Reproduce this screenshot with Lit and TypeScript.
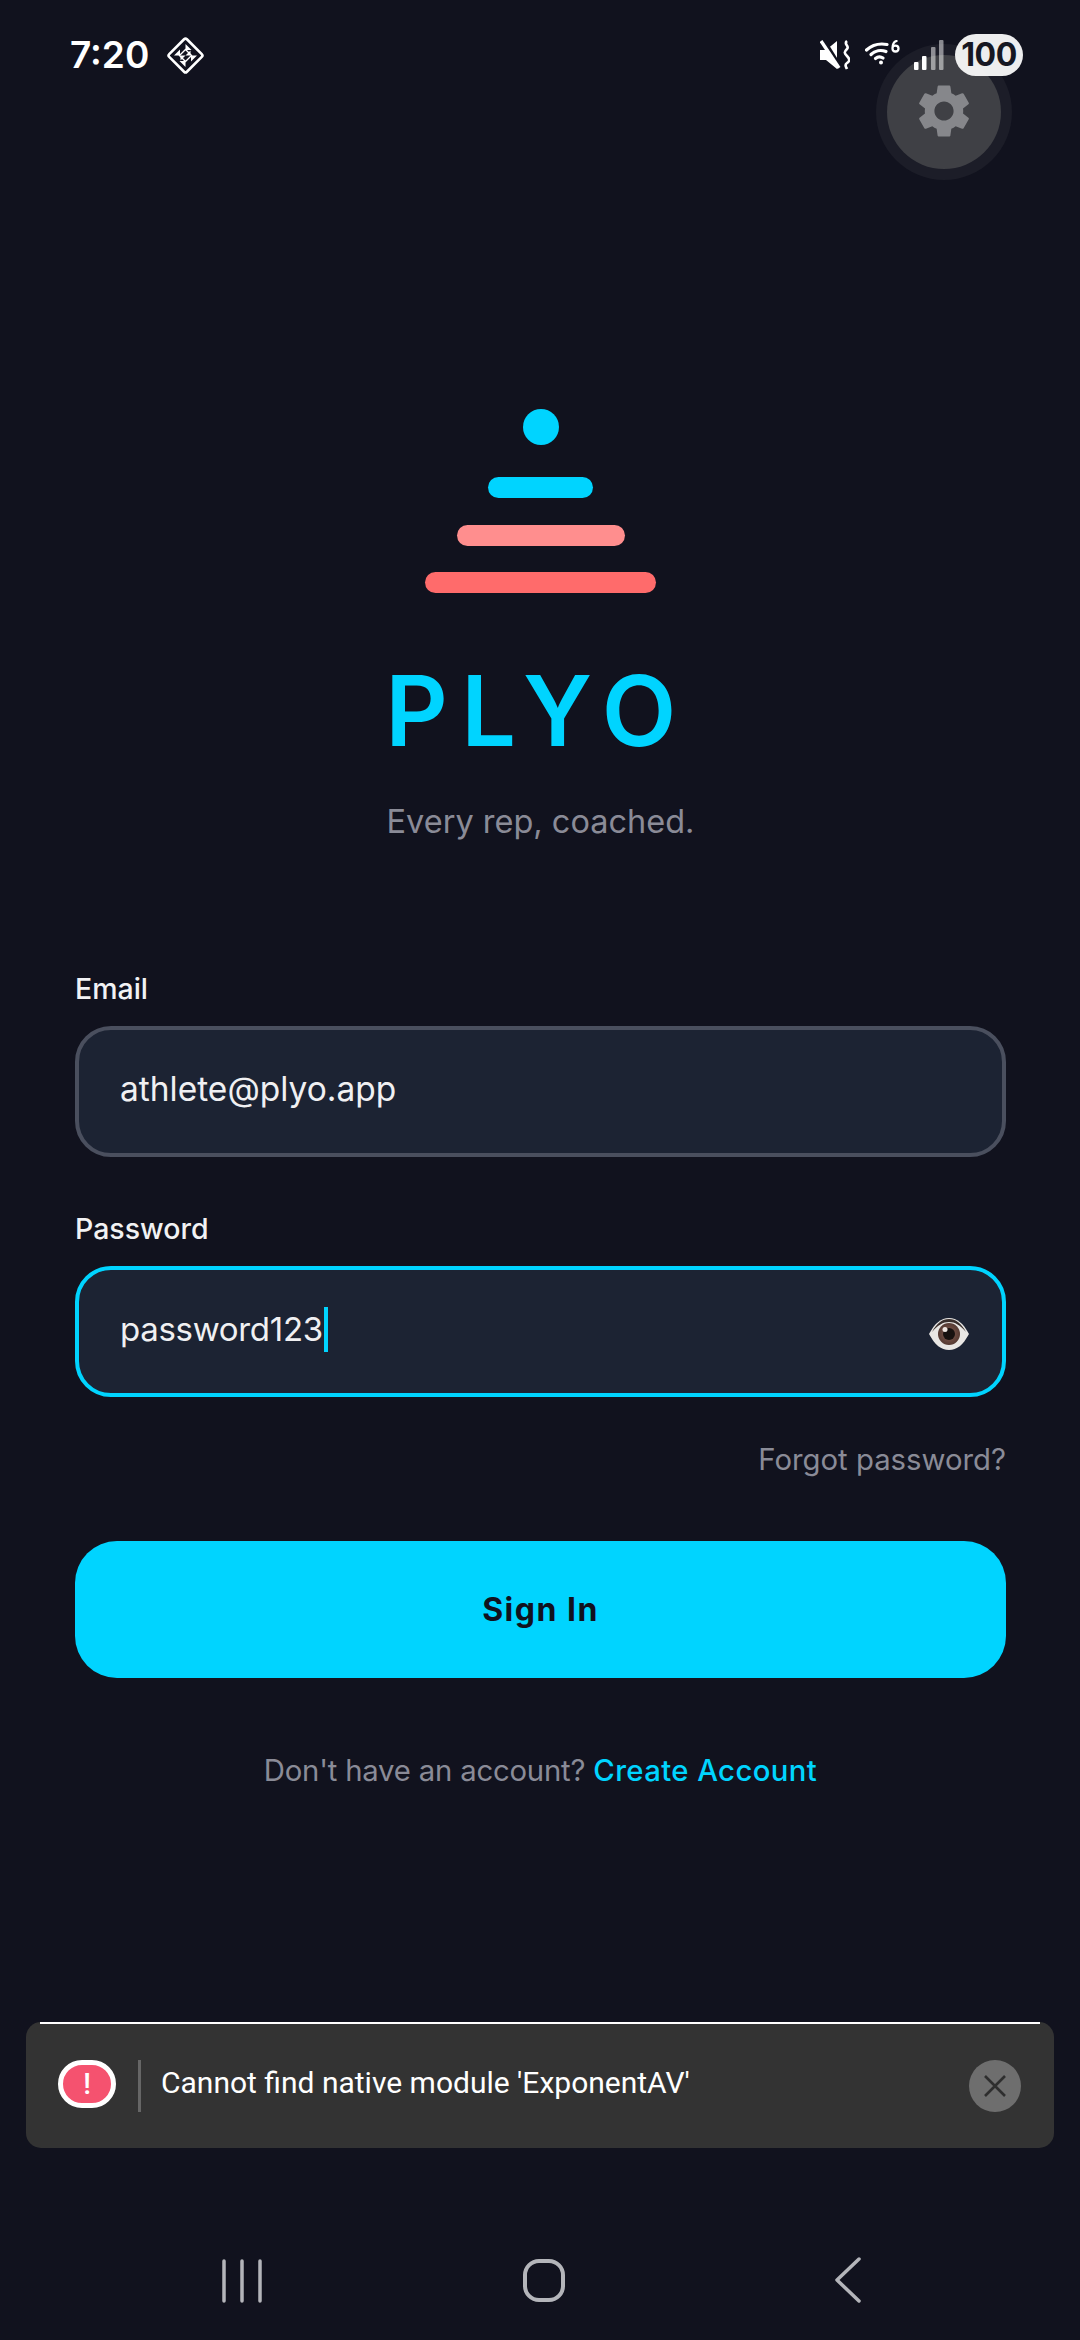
import { LitElement, html, css } from "lit";
import { customElement } from "lit/decorators.js";

@customElement("app-root")
export class AppRoot extends LitElement {
  static styles = css`
    :host { display: block; width: 1080px; height: 2340px; overflow: hidden; }
    * { box-sizing: border-box; }
    .page { position: relative; width: 1080px; height: 2340px; background: #11121e; display: flex; flex-direction: column; font-family: Inter, "Liberation Sans", sans-serif; color: #fff; }
    .status { position: relative; z-index: 2; height: 110px; display: flex; align-items: flex-start; padding: 34px 57px 0 70px; }
    .time { font-size: 37px; line-height: 42px; font-weight: 600; letter-spacing: 0; }
    .diamond { width: 37px; height: 37px; margin: 3px 0 0 18px; }
    .right { margin-left: auto; display: flex; align-items: flex-start; }
    .mute { width: 30px; height: 30px; margin: 6px 15px 0 0; }
    .wifi { width: 35px; height: 25px; margin: 6px 14px 0 0; }
    .signal { width: 30px; height: 30px; margin: 6px 11px 0 0; }
    .battery { width: 68px; height: 42px; border-radius: 21px; background: rgba(245,245,245,.97); color: #161722; font-size: 32px; line-height: 42px; font-weight: 700; text-align: center; letter-spacing: -0.5px; }
    .fab { position: absolute; z-index: 1; left: 887px; top: 55px; width: 114px; height: 114px; border-radius: 50%; background: #3f4045; box-shadow: 0 0 0 11px #1c1d28; display: flex; align-items: center; justify-content: center; }
    .fab svg { width: 64px; height: 64px; fill: #86878b; margin-bottom: 2px; }
    .main { padding: 0 74px 0 75px; display: flex; flex-direction: column; }
    .logo { margin-top: 299px; display: flex; flex-direction: column; align-items: center; gap: 26.5px; }
    .dot { width: 36px; height: 36px; border-radius: 50%; background: #00d4ff; margin-bottom: 5.5px; }
    .bar { height: 21px; border-radius: 10.5px; }
    .b1 { width: 105px; background: #00d4ff; }
    .b2 { width: 168px; background: #ff8e8e; }
    .b3 { width: 231px; background: #ff6b6b; }
    .title { margin-top: 60px; padding-right: 6px; text-align: center; font-size: 97px; line-height: 116px; font-weight: 600; letter-spacing: 13.5px; color: #00d4ff; }
    .tag { margin-top: 31px; text-align: center; font-size: 32.5px; line-height: 44px; color: #8a8b97; }
    .label { font-size: 28.5px; line-height: 40px; font-weight: 500; color: #f2f2f4; }
    .email-label { margin-top: 125px; }
    .pass-label { margin-top: 52px; }
    .field { margin-top: 17px; height: 131px; border-radius: 36px; border: 4px solid #4a4f5e; background: #1c2333; display: flex; align-items: center; padding: 0 33px 5px 41px; font-size: 33.5px; color: #f0f0f2; }
    .field.focus { border-color: #00d4ff; font-size: 33px; letter-spacing: -0.3px; }
    .caret { width: 4px; height: 45px; background: #00d4ff; margin-left: 1px; }
    .eye { width: 40px; height: 34px; margin-left: auto; margin-top: 10px; }
    .forgot { margin-top: 43px; text-align: right; font-size: 29.3px; line-height: 40px; color: #8a8b97; }
    .btn { margin-top: 61px; height: 137px; border-radius: 42px; background: #00d4ff; color: #11121e; display: flex; align-items: center; justify-content: center; font-size: 32px; font-weight: 700; letter-spacing: 1.5px; }
    .foot { margin-top: 71px; text-align: center; font-size: 29.3px; line-height: 44px; color: #8a8b97; letter-spacing: -0.2px; }
    .foot span { color: #00d4ff; font-weight: 500; letter-spacing: 0.4px; }
    .toast { position: absolute; left: 26px; top: 2022px; width: 1028px; height: 126px; border-radius: 15px; background: #333333; display: flex; align-items: flex-start; padding: 38px 33px 0 32px; font-family: Roboto, sans-serif; }
    .toast::before { content: ""; position: absolute; left: 14px; right: 14px; top: 0; height: 2px; background: #fff; }
    .alert { width: 58px; height: 48px; border-radius: 24px; background: #f5526f; border: 5px solid #fff; display: flex; align-items: center; justify-content: center; font: 500 29px/30px Roboto, sans-serif; color: #fff; }
    .sep { width: 3px; height: 52px; background: #666; margin: 0 20px 0 22px; }
    .msg { font-size: 30px; line-height: 46px; color: #fff; }
    .close { margin-left: auto; width: 52px; height: 52px; border-radius: 50%; background: #6e6e6e; display: flex; align-items: center; justify-content: center; }
    .close svg { width: 26px; height: 26px; stroke: #2e2e2e; stroke-width: 2.6; fill: none; }
    .nav { margin-top: auto; height: 42px; margin-bottom: 39px; position: relative; }
    .nav svg { position: absolute; stroke: #b4b5ba; fill: none; stroke-linecap: round; stroke-linejoin: round; }
    .recents { left: 220px; top: 0; width: 44px; height: 44px; stroke-width: 3.5; }
    .home { left: 520px; top: -1px; width: 48px; height: 46px; stroke-width: 4; }
    .back { left: 830px; top: -2px; width: 34px; height: 46px; stroke-width: 3.5; }
  `;

  render() {
    return html`
      <div class="page">
        <div class="status">
          <div class="time">7:20</div>
          <svg class="diamond" viewBox="0 0 37 37" fill="none" stroke="#fff">
            <rect x="6" y="6" width="25" height="25" rx="2" transform="rotate(45 18.5 18.5)" stroke-width="2.600"/>
            <g fill="#fff" stroke="none">
              <path d="M18.500 7l6 6h-6z"/>
              <path d="M18.500 7l6 6h-6z" transform="rotate(90 18.500 18.500)"/>
              <path d="M18.500 7l6 6h-6z" transform="rotate(180 18.500 18.500)"/>
              <path d="M18.500 7l6 6h-6z" transform="rotate(270 18.500 18.500)"/>
              <path d="M18.500 18.500h5v-5z"/>
              <path d="M18.500 18.500h-5v5z"/>
            </g>
            <path d="M18.500 12.500l6 6-6 6-6-6z" stroke-width="1.400"/>
          </svg>
          <div class="right">
            <svg class="mute" viewBox="0 0 30 30" fill="none" stroke="#fff">
              <path d="M0 10h6l11-9v28l-11-9H0z" fill="#fff" stroke="none"/>
              <path d="M3 0l18 29" stroke="#11121e" stroke-width="5"/>
              <path d="M1 1l18 27" stroke-width="3.400"/>
              <path d="M27 1c-4 3 3 5 0 8s-3 4 0 7 3 5 0 7-1 4 0 6" stroke-width="2.600"/>
            </svg>
            <svg class="wifi" viewBox="0 0 35 25" fill="none" stroke="#fff" stroke-width="3.200" stroke-linecap="round">
              <path d="M1.500 10C7 5 14 3 22 4.500"/>
              <path d="M6 14.500c4-4 10-5 15-3"/>
              <path d="M10.500 18.500c2.500-2.200 5-2.200 7.500-.5"/>
              <circle cx="16" cy="22.500" r="2" fill="#fff" stroke="none"/>
              <path d="M31.500 1c-3.500 1-4 4-4 7.500 0 4 6 4 6 0s-6-3.500-6-.5" stroke-width="2.300"/>
            </svg>
            <svg class="signal" viewBox="0 0 30 30" fill="#fff">
              <rect x="0" y="22" width="4.500" height="8" rx="1"/>
              <rect x="8" y="16" width="4.500" height="14" rx="1"/>
              <rect x="17" y="7" width="4.500" height="23" rx="1" opacity=".5"/>
              <rect x="25" y="0" width="4.500" height="30" rx="1" opacity=".5"/>
            </svg>
            <div class="battery">100</div>
          </div>
        </div>
        <div class="fab">
          <svg viewBox="0 0 24 24"><path d="M19.14 12.94c.04-.3.06-.61.06-.94 0-.32-.02-.64-.07-.94l2.03-1.58c.18-.14.23-.41.12-.61l-1.92-3.32c-.12-.22-.37-.29-.59-.22l-2.39.96c-.5-.38-1.03-.7-1.62-.94l-.36-2.54c-.04-.24-.24-.41-.48-.41h-3.84c-.24 0-.43.17-.47.41l-.36 2.54c-.59.24-1.13.57-1.62.94l-2.39-.96c-.22-.08-.47 0-.59.22L2.74 8.87c-.12.21-.08.47.12.61l2.03 1.58c-.05.3-.09.63-.09.94s.02.64.07.94l-2.03 1.58c-.18.14-.23.41-.12.61l1.92 3.32c.12.22.37.29.59.22l2.39-.96c.5.38 1.03.7 1.62.94l.36 2.54c.05.24.24.41.48.41h3.84c.24 0 .44-.17.47-.41l.36-2.54c.59-.24 1.13-.56 1.62-.94l2.39.96c.22.08.47 0 .59-.22l1.92-3.32c.12-.22.07-.47-.12-.61l-2.01-1.58zM12 15.600c-1.980 0-3.600-1.620-3.600-3.600s1.620-3.600 3.600-3.600 3.600 1.620 3.600 3.600-1.620 3.600-3.600 3.600z"/></svg>
        </div>
        <div class="main">
          <div class="logo">
            <div class="dot"></div>
            <div class="bar b1"></div>
            <div class="bar b2"></div>
            <div class="bar b3"></div>
          </div>
          <div class="title">PLYO</div>
          <div class="tag">Every rep, coached.</div>
          <div class="label email-label">Email</div>
          <div class="field">athlete@plyo.app</div>
          <div class="label pass-label">Password</div>
          <div class="field focus">
            password123<div class="caret"></div>
            <svg class="eye" viewBox="0 0 40 34">
              <defs>
                <radialGradient id="iris" cx=".5" cy=".5" r=".5"><stop offset=".55" stop-color="#6b4a40"/><stop offset="1" stop-color="#553a32"/></radialGradient>
              </defs>
              <path d="M0 17C6 6 12 1 20 1s14 5 20 16c-6 11-12 16-20 16S6 28 0 17z" fill="#e9e7e4"/>
              <path d="M3 15C8 6 13 2 20 2s12 4 17 13C31 8 26 5 20 5S9 8 3 15z" fill="#3a2f2c"/>
              <circle cx="20" cy="17" r="11" fill="url(#iris)"/>
              <circle cx="20" cy="17" r="6" fill="#17110f"/>
              <circle cx="16" cy="12.500" r="2.500" fill="#efe6e0"/>
            </svg>
          </div>
          <div class="forgot">Forgot password?</div>
          <div class="btn">Sign In</div>
          <div class="foot">Don't have an account? <span>Create Account</span></div>
        </div>
        <div class="toast">
          <div class="alert">!</div>
          <div class="sep"></div>
          <div class="msg">Cannot find native module 'ExponentAV'</div>
          <div class="close"><svg viewBox="0 0 26 26"><path d="M3 3l20 20M23 3L3 23"/></svg></div>
        </div>
        <div class="nav">
          <svg class="recents" viewBox="0 0 44 44"><path d="M4 2v40M22 2v40M40 2v40"/></svg>
          <svg class="home" viewBox="0 0 48 46"><rect x="5" y="3" width="38" height="39" rx="14"/></svg>
          <svg class="back" viewBox="0 0 34 46"><path d="M29 2L7 23l22 21"/></svg>
        </div>
      </div>
    `;
  }
}
